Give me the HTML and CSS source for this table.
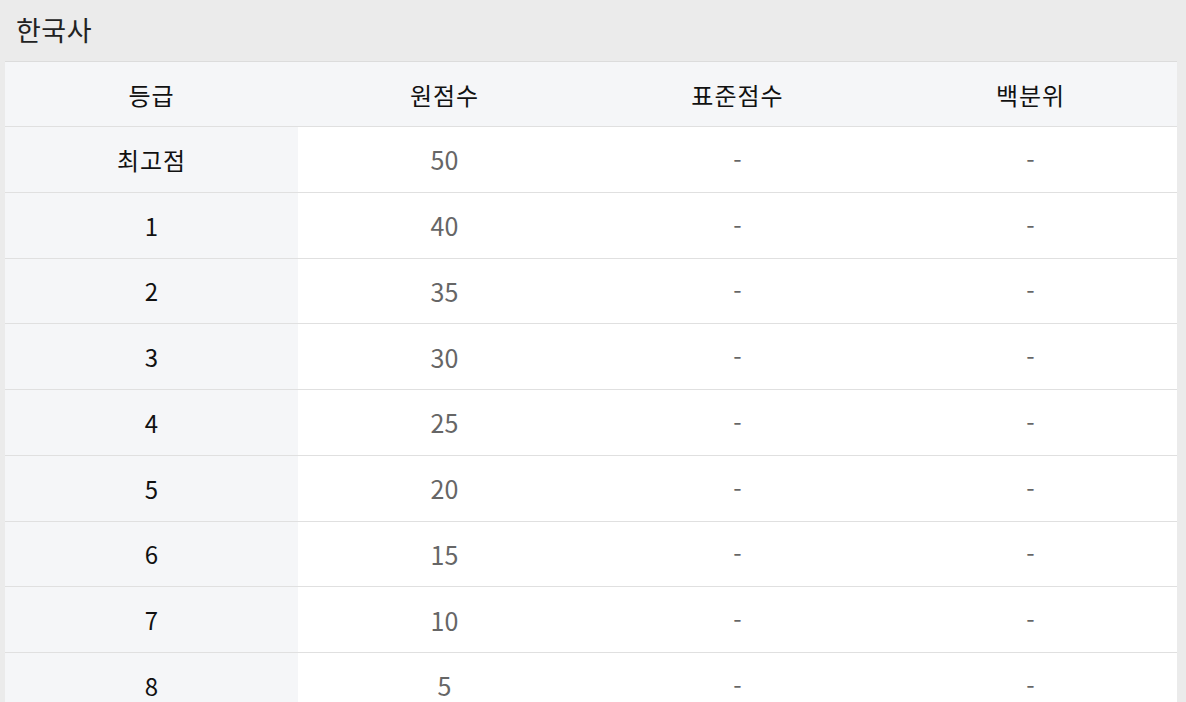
FILE: index.html
```html
<!DOCTYPE html>
<html lang="ko">
<head>
<meta charset="utf-8">
<link rel="stylesheet" href="styles.css">
</head>
<body>
<div class="panel">
  <h2 class="title">한국사</h2>
  <div class="table">
    <div class="row head">
      <div class="cell">등급</div><div class="cell">원점수</div><div class="cell">표준점수</div><div class="cell">백분위</div>
    </div>
    <div class="row"><div class="cell th ko">최고점</div><div class="cell num">50</div><div class="cell">-</div><div class="cell">-</div></div>
    <div class="row"><div class="cell th">1</div><div class="cell num">40</div><div class="cell">-</div><div class="cell">-</div></div>
    <div class="row"><div class="cell th">2</div><div class="cell num">35</div><div class="cell">-</div><div class="cell">-</div></div>
    <div class="row"><div class="cell th">3</div><div class="cell num">30</div><div class="cell">-</div><div class="cell">-</div></div>
    <div class="row"><div class="cell th">4</div><div class="cell num">25</div><div class="cell">-</div><div class="cell">-</div></div>
    <div class="row"><div class="cell th">5</div><div class="cell num">20</div><div class="cell">-</div><div class="cell">-</div></div>
    <div class="row"><div class="cell th">6</div><div class="cell num">15</div><div class="cell">-</div><div class="cell">-</div></div>
    <div class="row"><div class="cell th">7</div><div class="cell num">10</div><div class="cell">-</div><div class="cell">-</div></div>
    <div class="row"><div class="cell th">8</div><div class="cell num">5</div><div class="cell">-</div><div class="cell">-</div></div>
  </div>
</div>
</body>
</html>
```
FILE: styles.css
```css
html, body {
  margin: 0;
  padding: 0;
  background: #ebebeb;
  overflow: hidden;
}
.panel {
  padding: 0 9px 0 5px;
  font-family: "Noto Sans CJK KR", "Noto Sans", sans-serif;
}
.title {
  margin: 0;
  height: 61px;
  line-height: 59px;
  padding-left: 11px;
  font-size: 27px;
  font-weight: 400;
  color: #222;
  letter-spacing: 0.5px;
}
.table {
  background: #fff;
  border-top: 1px solid #dcdcdc;
}
.row {
  display: grid;
  grid-template-columns: repeat(4, 1fr);
  height: 65.75px;
  box-sizing: border-box;
  border-bottom: 1px solid #e0e0e0;
}
.row.head {
  height: 65px;
  background: #f5f6f8;
}
.cell {
  display: flex;
  align-items: center;
  justify-content: center;
  font-size: 24px;
  color: #666;
}
.row.head .cell, .cell.ko {
  letter-spacing: 1px;
}
.cell.num {
  font-size: 25px;
}
.row.head .cell, .cell.th {
  color: #111;
}
.cell.th {
  background: #f5f6f8;
}
```
